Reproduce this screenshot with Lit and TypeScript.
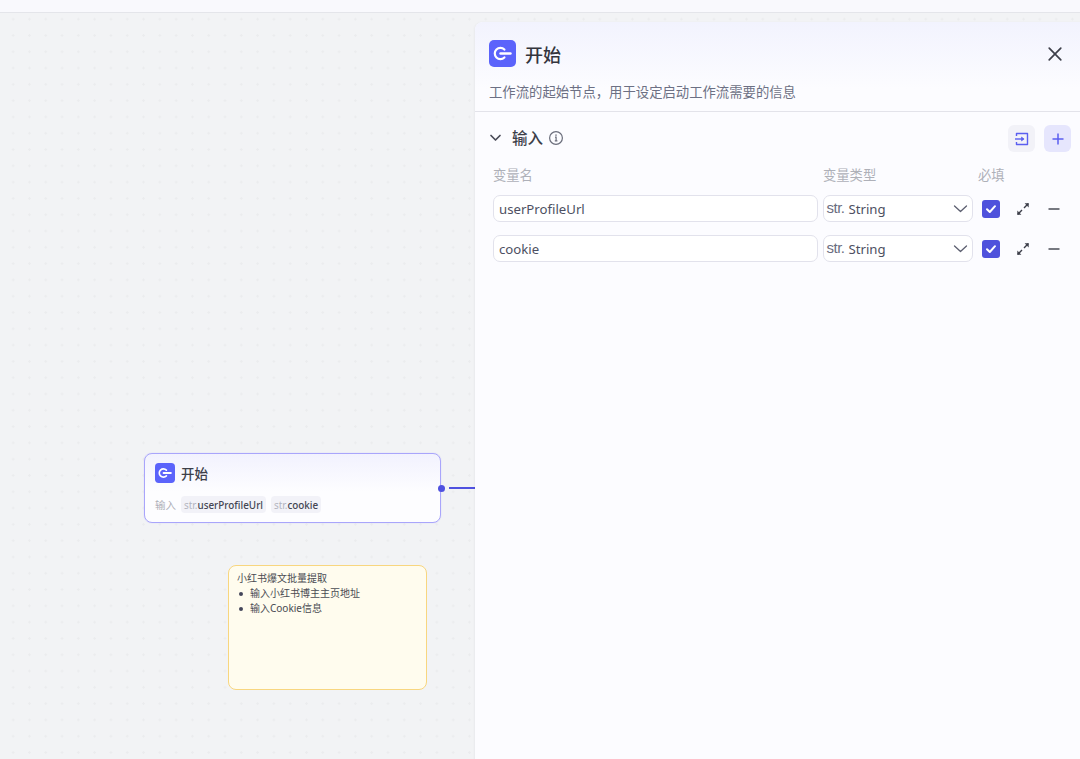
import { LitElement, html, css, svg } from 'lit';
import { customElement } from 'lit/decorators.js';

const startIcon = svg`
  <rect width="27" height="27" rx="5" fill="#5b63fb" />
  <path d="M15.4 9.6a5.6 5.6 0 1 0 0 7.8" fill="none" stroke="#fff" stroke-width="2.2" stroke-linecap="round" />
  <path d="M11.5 13.5h10" fill="none" stroke="#fff" stroke-width="2.4" stroke-linecap="round" />
`;

const rows = ['userProfileUrl', 'cookie'];

@customElement('app-root')
export class AppRoot extends LitElement {
  static styles = css`
    :host {
      display: flex;
      flex-direction: column;
      width: 1080px;
      height: 759px;
      overflow: hidden;
      font-family: 'Noto Sans', 'Noto Sans CJK SC', sans-serif;
      color: #3d3f4a;
    }

    * {
      box-sizing: border-box;
    }

    .topbar {
      height: 13px;
      flex: none;
      background: #f9f9fd;
      border-bottom: 1px solid #e4e5ea;
    }

    .canvas {
      position: relative;
      flex: 1;
      background-color: #f2f3f5;
      background-image: radial-gradient(circle, #ebecee 1px, transparent 1.4px);
      background-size: 16.3px 16.3px;
      background-position: 5px -2px;
    }

    /* nodes sit on the free canvas */
    .node {
      position: absolute;
      left: 144px;
      top: 440px;
      width: 297px;
      height: 70px;
      padding: 9px 10px 0;
      border: 1px solid #a9a5fb;
      border-radius: 8px;
      background: linear-gradient(#f2f2fe, #fdfdff 55%);
      box-shadow: 0 0 1px #b9b6fb;
    }

    .node-head {
      display: flex;
      align-items: center;
      gap: 6px;
      height: 20px;
      font-size: 13.5px;
      font-weight: 500;
    }

    .node-head svg {
      width: 20px;
      height: 20px;
    }

    .node-inputs {
      display: flex;
      align-items: center;
      gap: 5px;
      margin-top: 13px;
      font-size: 9.9px;
    }

    .node-inputs .lbl {
      width: 21px;
      font-size: 10.5px;
      color: #adafb8;
    }

    .tag {
      display: flex;
      align-items: center;
      height: 17px;
      padding: 0 3px;
      border-radius: 4px;
      background: #f2f2f8;
      font-weight: 500;
      color: #444653;
    }

    .tag span {
      font-weight: 400;
      color: #b3b5c0;
    }

    .port {
      position: absolute;
      left: 437.5px;
      top: 472px;
      width: 7px;
      height: 7px;
      border-radius: 50%;
      background: #4f51e0;
    }

    .edge {
      position: absolute;
      left: 449px;
      top: 474px;
      width: 30px;
      height: 1.5px;
      background: #4f51e0;
    }

    .note {
      position: absolute;
      left: 228px;
      top: 552px;
      width: 199px;
      height: 125px;
      padding: 5px 8px;
      border: 1.2px solid #f8d67f;
      border-radius: 8px;
      background: #fffcee;
      font-size: 10px;
      line-height: 15px;
      color: #4a4b52;
    }

    .note ul {
      margin: 0;
      padding: 0;
      list-style: none;
    }

    .note li {
      display: flex;
      align-items: center;
    }

    .note li::before {
      content: '';
      width: 4px;
      height: 4px;
      margin: 0 7px 0 2px;
      border-radius: 50%;
      background: #44465a;
    }

    /* side panel lies over the canvas */
    .panel {
      position: absolute;
      left: 475px;
      top: 9px;
      right: -8px;
      bottom: -8px;
      border-radius: 8px;
      background: #fcfcff;
      box-shadow: -1px 0 2px rgba(30, 30, 60, 0.04);
    }

    .panel-head {
      height: 90px;
      padding: 18px 14px 0;
      border-bottom: 1.5px solid #e3e3ea;
      border-radius: 8px 8px 0 0;
      background: linear-gradient(#f2f3fe, #fcfcff 75%);
    }

    .title-row {
      display: flex;
      align-items: center;
      height: 27px;
      padding-right: 8px;
    }

    .title-row svg.logo {
      width: 27px;
      height: 27px;
      margin-right: 9px;
    }

    .title-row h1 {
      flex: 1;
      margin: 0;
      font-size: 18px;
      font-weight: 500;
      color: #33343d;
    }

    .close {
      width: 16px;
      height: 16px;
      margin-right: 3px;
    }

    .desc {
      margin-top: 15px;
      font-size: 13.35px;
      line-height: 20px;
      color: #6c7084;
    }

    .section {
      padding: 13px 17px 0 14px;
    }

    .section-head {
      display: flex;
      align-items: center;
      height: 27px;
    }

    .chevron {
      width: 13px;
      height: 13px;
      margin: 0 10px 2px 0;
    }

    .section-head b {
      margin: 0 5px 2px 0;
      font-size: 15.5px;
      font-weight: 500;
    }

    .info {
      width: 16px;
      height: 16px;
      margin-bottom: 2px;
    }

    .spacer {
      flex: 1;
    }

    .icon-btn {
      display: flex;
      align-items: center;
      justify-content: center;
      width: 27px;
      height: 27px;
      margin-left: 9px;
      border-radius: 6px;
      background: #f2f2f8;
    }

    .icon-btn.add {
      background: #e6e6fd;
    }

    .icon-btn svg {
      width: 16px;
      height: 16px;
    }

    .grid {
      display: grid;
      grid-template-columns: 325px 150px 24px 31px 21px;
      column-gap: 5px;
      row-gap: 13px;
      align-items: center;
      margin-top: 13px;
      padding-left: 4px;
    }

    .grid .head {
      margin-bottom: -3px;
      font-size: 13.3px;
      line-height: 20px;
      color: #aeb0b8;
      white-space: nowrap;
    }

    .field {
      display: flex;
      align-items: center;
      height: 27px;
      padding-left: 5px;
      border: 1.5px solid #e2e2ec;
      border-radius: 7px;
      background: #fff;
      font-size: 13.2px;
      color: #4d5062;
    }

    .field.select {
      padding-left: 2.5px;
    }

    .field .type {
      margin-right: 4px;
      font-family: 'Liberation Sans', sans-serif;
      font-size: 15px;
      letter-spacing: -0.5px;
      color: #6a6d80;
      transform: translateY(-1px);
    }

    .field svg {
      width: 15px;
      height: 15px;
      margin-left: auto;
      margin-right: 4px;
    }

    .check {
      display: flex;
      align-items: center;
      justify-content: center;
      width: 18px;
      height: 18px;
      margin-left: 4px;
      border-radius: 3px;
      background: #4f52dc;
    }

    .check svg {
      width: 12px;
      height: 12px;
    }

    .act {
      width: 14px;
      height: 14px;
      justify-self: center;
    }
  `;

  renderRow(name: string) {
    return html`
      <div class="field">${name}</div>
      <div class="field select">
        <span class="type">str.</span>String
        <svg viewBox="0 0 15 15" fill="none" stroke="#5c5f70" stroke-width="1.3" stroke-linecap="round" stroke-linejoin="round">
          <path d="M1.5 5l6 5.5 6-5.5" />
        </svg>
      </div>
      <div class="check">
        <svg viewBox="0 0 12 12" fill="none" stroke="#fff" stroke-width="2" stroke-linecap="round" stroke-linejoin="round">
          <path d="M2 6.2l2.8 2.8L10 3.2" />
        </svg>
      </div>
      <svg class="act" viewBox="0 0 14 14" fill="none" stroke="#3d3f4a" stroke-width="1.4">
        <path d="M8 6l4.4-4.4M6 8L1.6 12.4" />
        <path d="M8.6 1.3h4.1v4.1z" fill="#3d3f4a" stroke="none" />
        <path d="M5.4 12.7H1.3V8.6z" fill="#3d3f4a" stroke="none" />
      </svg>
      <svg class="act" viewBox="0 0 14 14" fill="none" stroke="#3d3f4a" stroke-width="1.4">
        <path d="M1.5 7h11" />
      </svg>
    `;
  }

  render() {
    return html`
      <div class="topbar"></div>
      <div class="canvas">
        <div class="node">
          <div class="node-head">
            <svg viewBox="0 0 27 27">${startIcon}</svg>
            开始
          </div>
          <div class="node-inputs">
            <span class="lbl">输入</span>
            <div class="tag"><span>str.</span>userProfileUrl</div>
            <div class="tag"><span>str.</span>cookie</div>
          </div>
        </div>
        <div class="port"></div>
        <div class="edge"></div>

        <div class="note">
          小红书爆文批量提取
          <ul>
            <li>输入小红书博主主页地址</li>
            <li>输入Cookie信息</li>
          </ul>
        </div>

        <div class="panel">
          <div class="panel-head">
            <div class="title-row">
              <svg class="logo" viewBox="0 0 27 27">${startIcon}</svg>
              <h1>开始</h1>
              <svg class="close" viewBox="0 0 16 16" fill="none" stroke="#3d3f4a" stroke-width="1.7" stroke-linecap="round">
                <path d="M2.2 2.2l11.6 11.6M13.8 2.2L2.2 13.8" />
              </svg>
            </div>
            <div class="desc">工作流的起始节点，用于设定启动工作流需要的信息</div>
          </div>
          <div class="section">
            <div class="section-head">
              <svg class="chevron" viewBox="0 0 13 13" fill="none" stroke="#4a4c58" stroke-width="1.7" stroke-linecap="round" stroke-linejoin="round">
                <path d="M2 4.5l4.5 4.5L11 4.5" />
              </svg>
              <b>输入</b>
              <svg class="info" viewBox="0 0 16 16" fill="none" stroke="#6b6e7c" stroke-width="1.2">
                <circle cx="8" cy="8" r="6.4" />
                <path d="M7 7.2h1.1v3.6M6.8 10.9h2.6" />
                <path d="M8 4.4v1.3" stroke-width="1.5" />
              </svg>
              <div class="spacer"></div>
              <div class="icon-btn">
                <svg viewBox="0 0 16 16" fill="none" stroke="#5b5ff0" stroke-width="1.4" stroke-linejoin="round">
                  <path d="M2.5 5V2.5h11v11h-11V11" />
                  <path d="M1 8h8.5" />
                  <path d="M7.5 6l2.6 2-2.6 2z" fill="#5b5ff0" stroke-width="0.6" />
                </svg>
              </div>
              <div class="icon-btn add">
                <svg viewBox="0 0 16 16" fill="none" stroke="#5b5ff0" stroke-width="1.5">
                  <path d="M8 2.5v11M2.5 8h11" />
                </svg>
              </div>
            </div>
            <div class="grid">
              <div class="head">变量名</div>
              <div class="head">变量类型</div>
              <div class="head">必填</div>
              <div></div>
              <div></div>
              ${rows.map((r) => this.renderRow(r))}
            </div>
          </div>
        </div>
      </div>
    `;
  }
}
